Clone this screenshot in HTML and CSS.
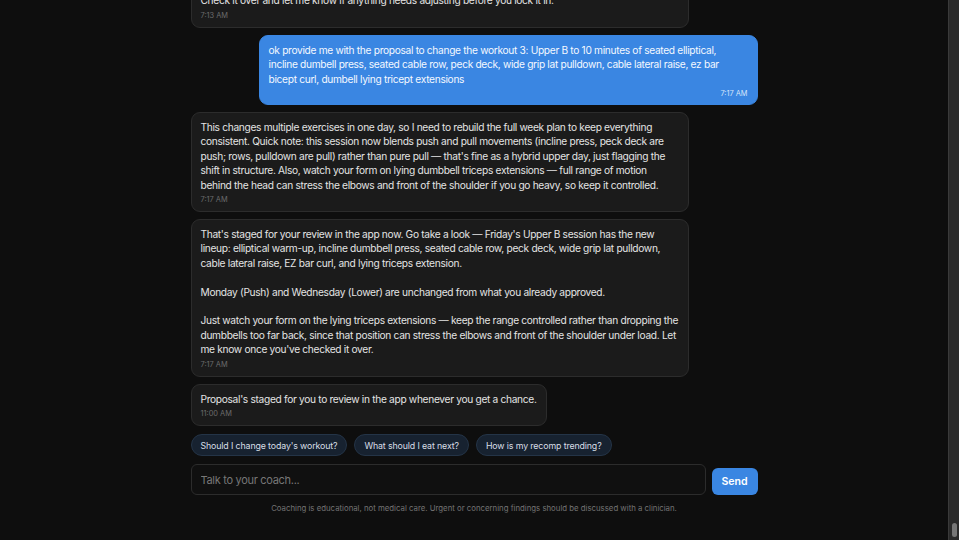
FILE: index.html
```html
<!DOCTYPE html>
<html lang="en">
<head>
  <meta charset="UTF-8">
  <meta name="viewport" content="width=device-width, initial-scale=1.0">
  <title>Coach Chat</title>
  <link rel="stylesheet" href="styles.css">
</head>
<body>
  <div class="page">
    <main class="app">
      <div class="thread">
        <div class="messages">
          <div class="msg coach">
            <p>I've put together the updated week for you: Monday stays as your Push day, Wednesday stays as Lower, and Friday's Upper B has been rebuilt around the exercises you asked for, with the same set and rep targets as before.</p>
            <p>Check it over and let me know if anything needs adjusting before you lock it in.</p>
            <span class="time">7:13 AM</span>
          </div>

          <div class="msg user">
            <p>ok provide me with the proposal to change the workout 3: Upper B to 10 minutes of seated elliptical, incline dumbell press, seated cable row, peck deck, wide grip lat pulldown, cable lateral raise, ez bar bicept curl, dumbell lying tricept extensions</p>
            <span class="time">7:17 AM</span>
          </div>

          <div class="msg coach">
            <p>This changes multiple exercises in one day, so I need to rebuild the full week plan to keep everything consistent. Quick note: this session now blends push and pull movements (incline press, peck deck are push; rows, pulldown are pull) rather than pure pull &mdash; that's fine as a hybrid upper day, just flagging the shift in structure. Also, watch your form on lying dumbbell triceps extensions &mdash; full range of motion behind the head can stress the elbows and front of the shoulder if you go heavy, so keep it controlled.</p>
            <span class="time">7:17 AM</span>
          </div>

          <div class="msg coach">
            <p>That's staged for your review in the app now. Go take a look &mdash; Friday's Upper B session has the new lineup: elliptical warm-up, incline dumbbell press, seated cable row, peck deck, wide grip lat pulldown, cable lateral raise, EZ bar curl, and lying triceps extension.</p>
            <p>Monday (Push) and Wednesday (Lower) are unchanged from what you already approved.</p>
            <p>Just watch your form on the lying triceps extensions &mdash; keep the range controlled rather than dropping the dumbbells too far back, since that position can stress the elbows and front of the shoulder under load. Let me know once you've checked it over.</p>
            <span class="time">7:17 AM</span>
          </div>

          <div class="msg coach">
            <p>Proposal's staged for you to review in the app whenever you get a chance.</p>
            <span class="time">11:00 AM</span>
          </div>
        </div>

        <div class="suggestions">
          <button class="chip">Should I change today's workout?</button>
          <button class="chip">What should I eat next?</button>
          <button class="chip">How is my recomp trending?</button>
        </div>

        <form class="composer">
          <input type="text" class="composer-input" placeholder="Talk to your coach...">
          <button type="button" class="send-btn">Send</button>
        </form>

        <p class="disclaimer">Coaching is educational, not medical care. Urgent or concerning findings should be discussed with a clinician.</p>
      </div>
    </main>

    <!-- page scrollbar, pinned to the newest message -->
    <div class="scroll-rail">
      <div class="scroll-thumb"></div>
    </div>
  </div>
</body>
</html>
```

FILE: styles.css
```css
* {
  box-sizing: border-box;
}

html, body {
  margin: 0;
  padding: 0;
  height: 100%;
  background-color: #0e0e0e;
  font-family: Inter, "Noto Sans", sans-serif;
  color: #e4e4e4;
}

.page {
  display: flex;
  height: 100vh;
}

/* thread sticks to the bottom, older messages run off the top */
.app {
  flex: 1;
  min-width: 0;
  overflow: hidden;
  display: flex;
  flex-direction: column;
  justify-content: flex-end;
}

.scroll-rail {
  width: 11px;
  flex-shrink: 0;
  display: flex;
  flex-direction: column;
  justify-content: flex-end;
  padding: 0 2px 3px 3px;
  background-color: #2a2a2a;
  border-left: 1px solid #3a3a3a;
}

.scroll-thumb {
  height: 14px;
  border-radius: 3px;
  background-color: #767676;
}

.thread {
  width: 100%;
  max-width: 567px;
  margin: 0 auto;
  padding-bottom: 27px;
}

.messages {
  display: flex;
  flex-direction: column;
  gap: 7px;
}

.msg {
  max-width: 88%;
  padding: 7px 9px 6px;
  border-radius: 9px;
  font-size: 10.2px;
  line-height: 14.4px;
  letter-spacing: -0.32px;
}

.msg p {
  margin: 0 0 14.4px;
}

.msg p:last-of-type {
  margin-bottom: 0;
}

.msg.coach {
  align-self: flex-start;
  background-color: #1b1b1b;
  border: 1px solid #2c2c2c;
  color: #e4e4e4;
}

.msg.user {
  align-self: flex-end;
  background-color: #3a86e2;
  border: 1px solid #3a86e2;
  color: #f4f8ff;
  padding-bottom: 5px;
}

.time {
  display: block;
  margin-top: 3px;
  font-size: 7.4px;
  line-height: 10px;
  letter-spacing: 0;
  color: #6b6b6b;
}

.msg.user .time {
  text-align: right;
  color: #d4e4fa;
}

.suggestions {
  display: flex;
  gap: 7px;
  margin-top: 8px;
}

.chip {
  height: 22px;
  padding: 0 9px;
  border-radius: 11px;
  background-color: #172230;
  border: 1px solid #243447;
  color: #d8dee6;
  font-family: Inter, "Noto Sans", sans-serif;
  font-size: 8.8px;
  letter-spacing: -0.12px;
}

.composer {
  display: flex;
  align-items: flex-end;
  gap: 6px;
  margin-top: 8px;
}

.composer-input {
  flex: 1;
  height: 31px;
  padding: 0 9px;
  background-color: #101010;
  border: 1px solid #2c2c2c;
  border-radius: 6px;
  color: #e4e4e4;
  font-family: Inter, "Noto Sans", sans-serif;
  font-size: 11px;
  letter-spacing: -0.3px;
  outline: none;
}

.composer-input::placeholder {
  color: #777;
}

.send-btn {
  width: 46px;
  height: 27px;
  border: none;
  border-radius: 6px;
  background-color: #3a86e2;
  color: white;
  font-family: Inter, "Noto Sans", sans-serif;
  font-size: 10.6px;
  font-weight: 600;
}

.disclaimer {
  margin: 8px 0 0;
  text-align: center;
  font-size: 7.8px;
  line-height: 10px;
  color: #737373;
}
```
